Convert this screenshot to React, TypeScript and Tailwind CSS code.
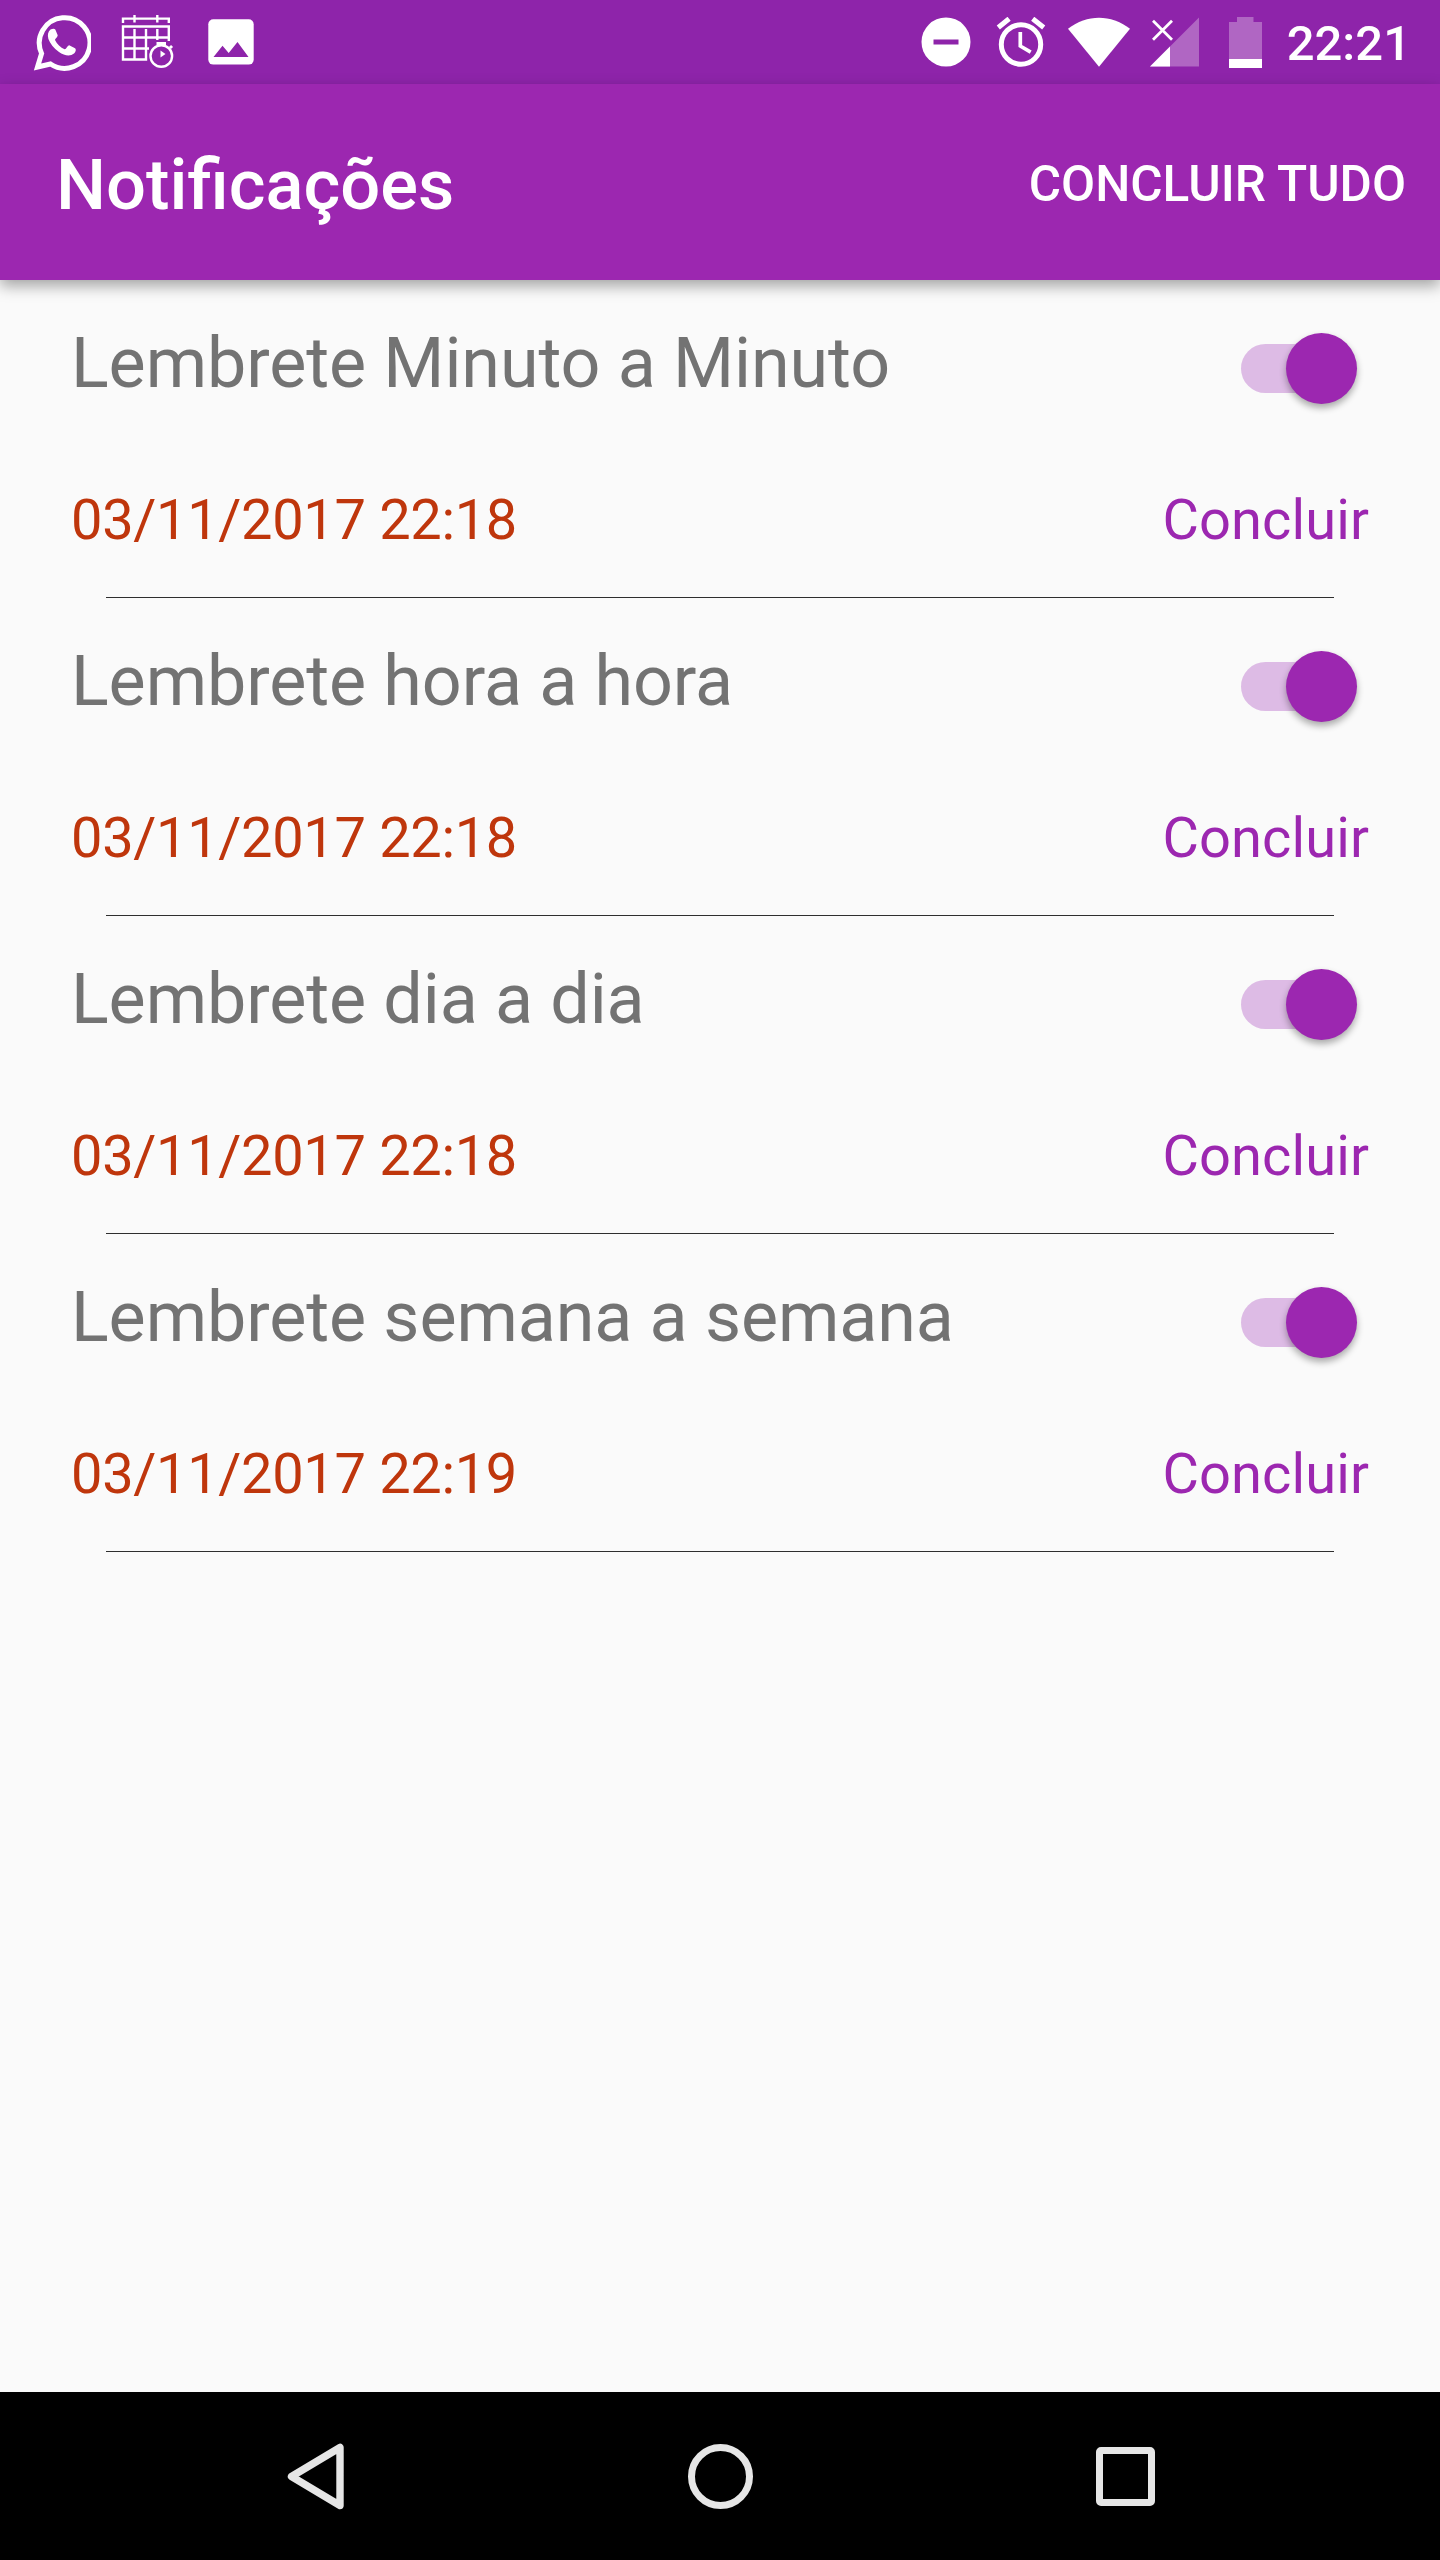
import React from "react";

const reminders = [
  { title: "Lembrete Minuto a Minuto", date: "03/11/2017 22:18" },
  { title: "Lembrete hora a hora", date: "03/11/2017 22:18" },
  { title: "Lembrete dia a dia", date: "03/11/2017 22:18" },
  { title: "Lembrete semana a semana", date: "03/11/2017 22:19" },
];

function WhatsAppIcon() {
  return (
    <svg className="ml-[33px] h-[58px] w-[58px]" viewBox="34 13 58 58" fill="none">
      <path d="M38.5 67 L42.6 53.5 A25.3 25.3 0 1 1 51.5 64 Z" stroke="white" strokeWidth="5" strokeMiterlimit="8" />
      <path
        d="M51.5 29.5 C53.5 28.5 55.5 28.3 56.3 29.5 L58.6 35 C59.2 36.8 56 38.6 56 40 C58 44 61.5 47.6 65.6 49.3 C67.3 49.5 68.6 45.2 70.2 45.3 L76 48.2 C77.6 49.5 76.6 52 75 53.6 C71 57 65 55.6 60 52 C54.6 48 51 43.5 49.4 39 C48.3 35 49 31.5 51.5 29.5 Z"
        fill="white"
      />
    </svg>
  );
}

function CalendarIcon() {
  return (
    <svg className="ml-[30px] h-[56px] w-[54px]" viewBox="121 15 54 56" fill="none" stroke="white" strokeWidth="2.4">
      <path d="M123 24 V19.6 H168.8 V24 M134.5 16 V23.5 M157.3 16 V23.5" />
      <path d="M168.8 42 V27.5 H123 V60.5 H146 V30 M123 38.5 H168.8 M123 49.5 H149 M134.5 30 V60.5 M157.3 30 V41" />
      <circle cx="161.3" cy="57" r="10.8" />
      <path d="M156.5 44.5 H166 M170 47 L172 49" strokeWidth="3" />
      <path d="M160.5 51.5 L165.5 55 L160.5 58.5 Z" fill="white" stroke="none" />
    </svg>
  );
}

function PictureIcon() {
  return (
    <svg className="ml-[33px] h-[46px] w-[46px]" viewBox="208 19 46 46">
      <rect x="208.3" y="19.2" width="45.4" height="45.4" rx="5" fill="white" />
      <path d="M213.5 57 L222.5 45.7 L228.7 53 L237.5 42 L248.5 57 Z" fill="#8E24AA" />
    </svg>
  );
}

function DoNotDisturbIcon() {
  return (
    <svg className="mr-[25px] h-[50px] w-[50px]" viewBox="920.5 17.5 50 50">
      <circle cx="945.5" cy="42.5" r="24.5" fill="white" />
      <rect x="933" y="40" width="25" height="5" fill="#8E24AA" />
    </svg>
  );
}

function AlarmIcon() {
  return (
    <svg className="mr-[22px] h-[50px] w-[50px]" viewBox="995.5 17.5 50 50" fill="none" stroke="white">
      <circle cx="1020.5" cy="45" r="19.7" strokeWidth="5" />
      <path d="M1019.8 32.5 V46.5 L1030.2 52.7" strokeWidth="3.7" />
      <path d="M997.8 28 L1008.6 19.2 M1032.2 19.2 L1043.2 28" strokeWidth="5" />
    </svg>
  );
}

function WifiIcon() {
  return (
    <svg className="mr-[20px] h-[50px] w-[62px]" viewBox="1068 16.5 62 50">
      <path d="M1099 66.2 L1068 28.2 C1087 13.5 1111 13.5 1130 28.2 Z" fill="white" />
    </svg>
  );
}

function SignalIcon() {
  return (
    <svg className="mr-[30px] h-[50px] w-[49px]" viewBox="1150 16.5 49 50">
      <path d="M1150 66 L1199 17 V66 Z" fill="white" fillOpacity="0.3" />
      <path d="M1150 66 L1170 46 V66 Z" fill="white" />
      <path d="M1153 20.3 L1172 39.3 M1172 20.3 L1153 39.3" stroke="white" strokeWidth="2.8" />
    </svg>
  );
}

function BatteryIcon() {
  return (
    <svg className="mr-[25px] h-[51px] w-[33px]" viewBox="1229 16 33 51">
      <path d="M1229 21 H1237 V16 H1253.5 V21 H1262 V58 H1229 Z" fill="white" fillOpacity="0.3" />
      <rect x="1229" y="58" width="33" height="9" fill="white" />
    </svg>
  );
}

function StatusBar() {
  return (
    <div className="flex h-[84px] items-center bg-[#8E24AA]">
      <WhatsAppIcon />
      <CalendarIcon />
      <PictureIcon />
      <div className="ml-auto flex items-center pr-[29px]">
        <DoNotDisturbIcon />
        <AlarmIcon />
        <WifiIcon />
        <SignalIcon />
        <BatteryIcon />
        <span className="pt-[4px] text-[49px] leading-[58px] font-medium text-white">22:21</span>
      </div>
    </div>
  );
}

function Switch() {
  return (
    <button role="switch" aria-checked="true" className="relative mt-[53px] mr-[13px] flex h-[71px] w-[116px] items-center">
      <span className="h-[49px] w-[100px] rounded-full bg-[#DDBBE5]" />
      <span className="absolute top-0 right-0 size-[71px] rounded-full bg-[#9C27B0] shadow-[0_4px_7px_rgba(0,0,0,0.33)]" />
    </button>
  );
}

function Reminder({ title, date }: { title: string; date: string }) {
  return (
    <li className="flex h-[318px] flex-col pr-[70px] pl-[71px]">
      <div className="flex justify-between">
        <span className="mt-[42px] text-[70px] leading-[82px] tracking-[-0.08px] text-[#737373]">{title}</span>
        <Switch />
      </div>
      <div className="mt-auto flex justify-between text-[56px] leading-[66px]">
        <span className="tracking-[-0.34px] text-[#BF360C]">{date}</span>
        <button className="mr-px tracking-[0.1px] text-[#9C27B0]">Concluir</button>
      </div>
      <div className="mt-[44px] mr-[36px] ml-[35px] h-px shrink-0 bg-[#2E2E2E]" />
    </li>
  );
}

function NavigationBar() {
  return (
    <div className="flex h-[168px] items-center bg-black">
      <svg className="ml-[286px] h-[68px] w-[60px]" viewBox="286 2442 60 68" fill="none" stroke="#E6E6E6">
        <path d="M291.5 2476.5 L340 2447.5 V2505.5 Z" strokeWidth="7.4" strokeLinejoin="round" />
      </svg>
      <span className="ml-[342px] size-[65px] rounded-full border-[7.5px] border-[#E6E6E6]" />
      <span className="ml-[343px] size-[59px] rounded-[5px] border-[7px] border-[#E6E6E6]" />
    </div>
  );
}

export default function App() {
  return (
    <div className="flex h-[2560px] w-[1440px] flex-col bg-[#FAFAFA] font-['Roboto',sans-serif]">
      <StatusBar />
      <header className="relative flex h-[196px] items-center justify-between bg-[#9C27B0] pr-[34px] pl-[56px] text-white shadow-[0_6px_14px_rgba(0,0,0,0.35)]">
        <h1 className="pt-[6px] text-[70.5px] leading-[82px] font-medium">Notificações</h1>
        <button className="pt-[4px] text-[49.5px] leading-[58px] font-medium">CONCLUIR TUDO</button>
      </header>
      <ul className="flex-1">
        {reminders.map((reminder) => (
          <Reminder key={reminder.title} {...reminder} />
        ))}
      </ul>
      <NavigationBar />
    </div>
  );
}
